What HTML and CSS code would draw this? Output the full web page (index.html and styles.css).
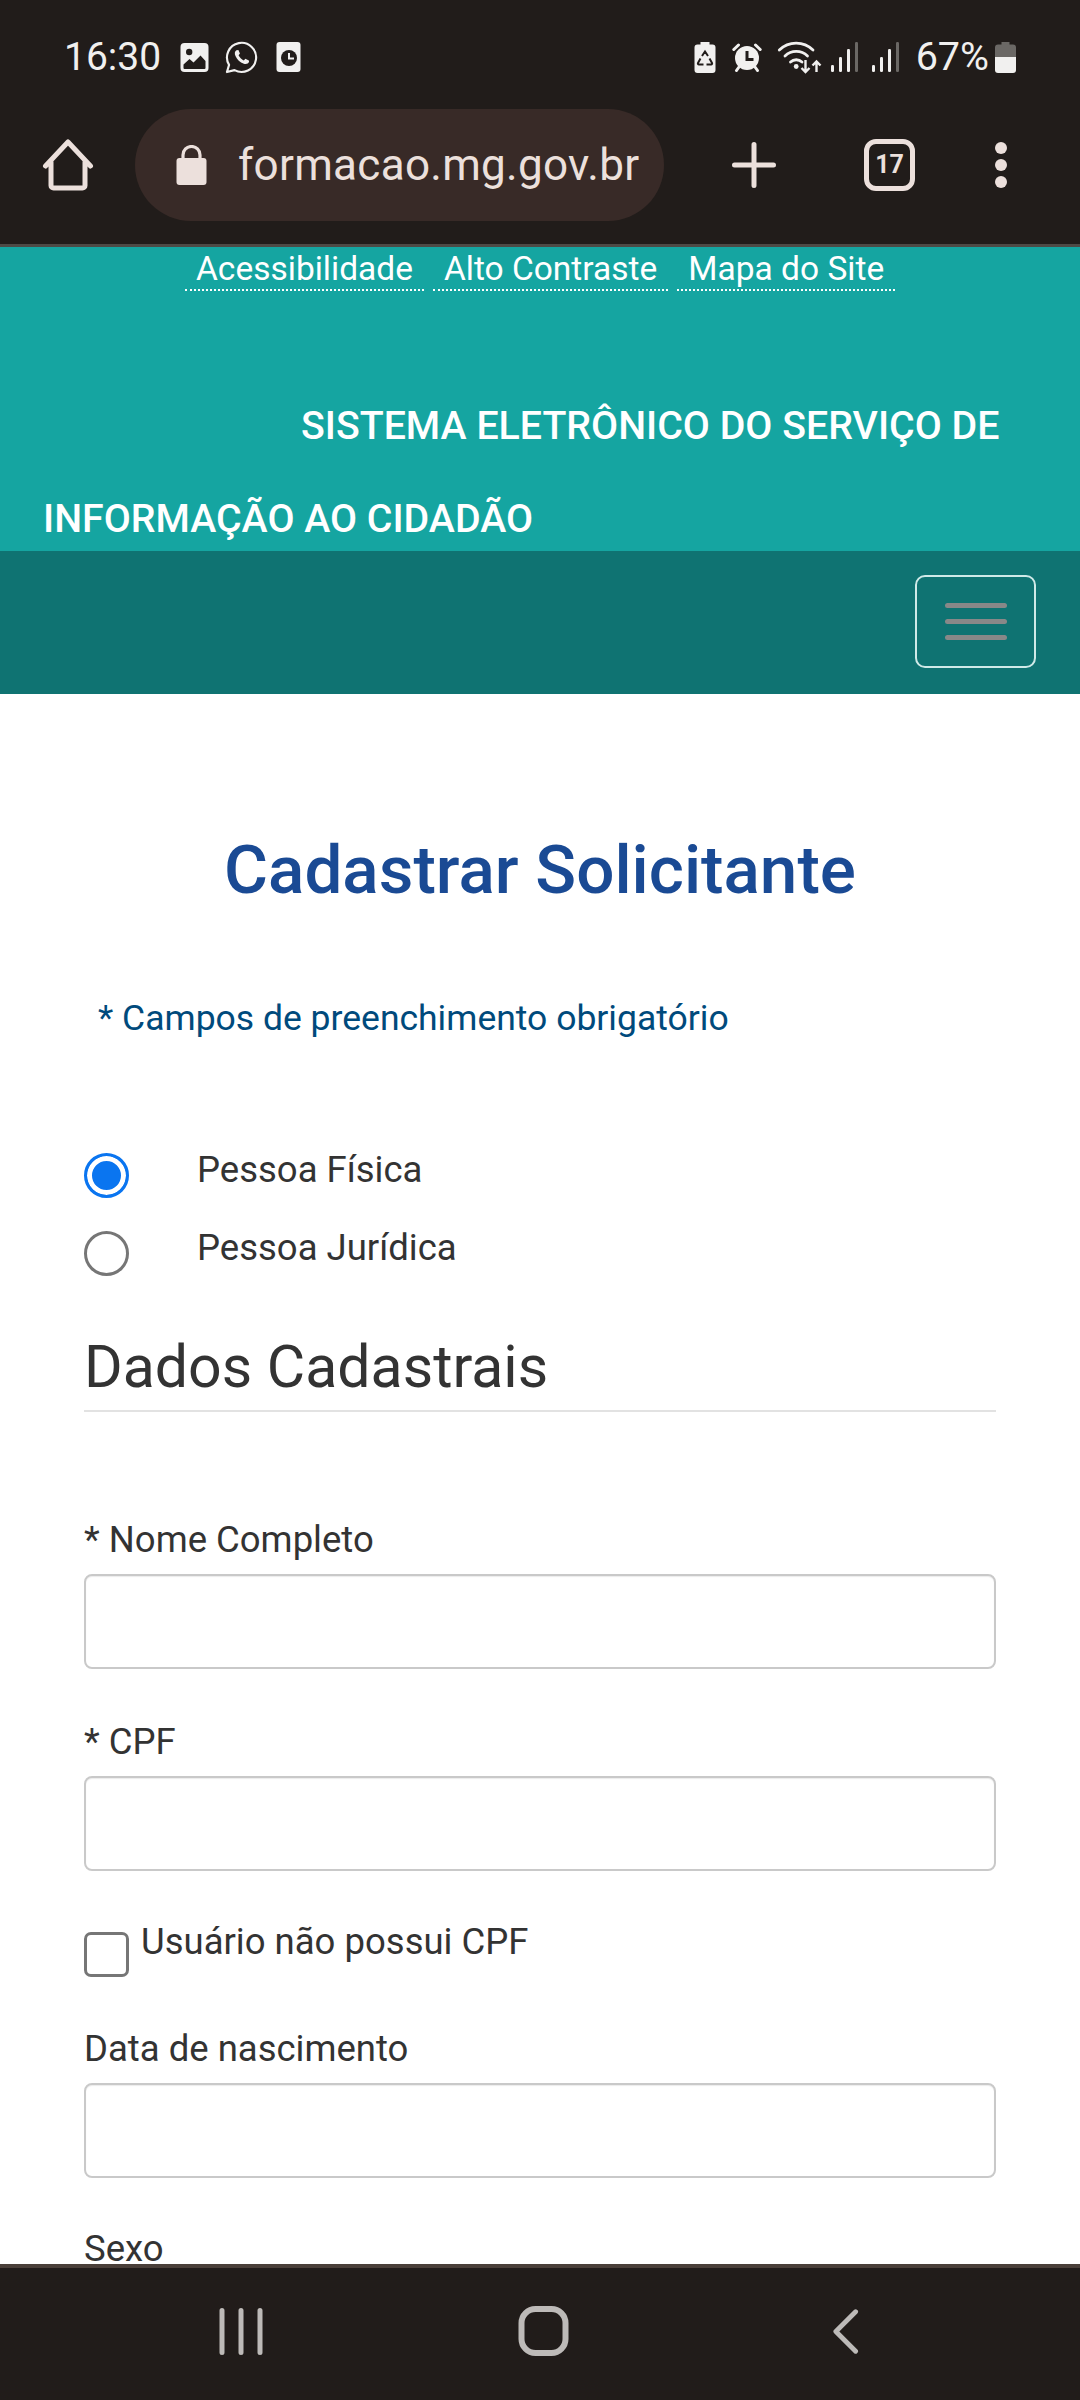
FILE: index.html
```html
<!DOCTYPE html>
<html lang="pt-BR">
<head>
<meta charset="utf-8">
<title>Cadastrar Solicitante</title>
<link rel="stylesheet" href="styles.css">
</head>
<body>
<div class="phone">
  <header class="chrome">
    <div class="status">
      <div class="status-left">
        <span class="time">16:30</span>
        <svg class="ic-gallery" viewBox="0 0 28 29"><rect width="28" height="29" rx="4" fill="#f1f0ef"/><circle cx="8.7" cy="9" r="3.2" fill="#211c1a"/><path d="M3 25 V21.5 L9 16 L13 19.5 L20 12.5 L25 18 V25 A1 1 0 0 1 24 26 H4 A1 1 0 0 1 3 25 Z" fill="#211c1a"/></svg>
        <svg class="ic-wa" viewBox="0 0 34 34"><path d="M2 32 L4.2 24.6 A15 15 0 1 1 9.8 30 Z" fill="none" stroke="#f1f0ef" stroke-width="2.2" stroke-linejoin="round"/><path d="M11.8 9.5 C10 10.6 9.6 12.8 10.8 15.4 C12.4 19 15.4 22 19.4 23.4 C21.8 24.2 24 23.4 24.8 21.4 L24.6 20 L21 18.4 L19.4 20 C17 19 15 17 14 14.8 L15.4 13 L13.8 9.4 Z" fill="#f1f0ef"/></svg>
        <svg class="ic-clock" viewBox="0 0 24 30"><rect width="24" height="30" rx="3" fill="#f1f0ef"/><circle cx="12.5" cy="16" r="8" fill="#211c1a"/><path d="M12.5 11 V16.5 H17.5" fill="none" stroke="#f1f0ef" stroke-width="2"/></svg>
      </div>
      <div class="status-right">
        <svg class="ic-recycle" viewBox="0 0 21 31"><path d="M6 0 H15 V2.5 H18 A3 3 0 0 1 21 5.5 V28 A3 3 0 0 1 18 31 H3 A3 3 0 0 1 0 28 V5.5 A3 3 0 0 1 3 2.5 H6 Z" fill="#f1f0ef"/><path d="M7.5 14 L10.5 9.5 L13.5 14 M15 16.5 L17.5 21 A1 1 0 0 1 16.6 22.5 H12 M9 22.5 H4.4 A1 1 0 0 1 3.5 21 L6 16.5" fill="none" stroke="#211c1a" stroke-width="2"/></svg>
        <svg class="ic-alarm" viewBox="0 0 30 30"><path d="M1.8 7.5 L6.5 3 M28.2 7.5 L23.5 3" stroke="#f1f0ef" stroke-width="3" stroke-linecap="round"/><path d="M7 25 L4.5 28.5 M23 25 L25.5 28.5" stroke="#f1f0ef" stroke-width="3" stroke-linecap="round"/><circle cx="15" cy="16" r="12" fill="#f1f0ef"/><path d="M15 9 V17.5 H21.5" fill="none" stroke="#211c1a" stroke-width="3"/></svg>
        <svg class="ic-wifi" viewBox="0 0 44 33"><path d="M1.8 9 A24 24 0 0 1 35.5 9" fill="none" stroke="#f1f0ef" stroke-width="2.8" stroke-linecap="round"/><path d="M7.5 15 A16 16 0 0 1 30 15" fill="none" stroke="#f1f0ef" stroke-width="2.8" stroke-linecap="round"/><path d="M13 21 A8.5 8.5 0 0 1 24.5 21" fill="none" stroke="#f1f0ef" stroke-width="2.8" stroke-linecap="round"/><circle cx="18.7" cy="25.5" r="2.4" fill="#f1f0ef"/><path d="M28 19 V31 M24 27 L28 31 L32 27 M39 31 V20.5 M35 24.5 L39 20.5 L43 24.5" fill="none" stroke="#f1f0ef" stroke-width="2.4"/></svg>
        <svg class="ic-signal" viewBox="0 0 27 30"><rect x="0" y="23" width="3" height="7" rx="1.2" fill="#f1f0ef"/><rect x="8" y="15" width="3" height="15" rx="1.2" fill="#f1f0ef"/><rect x="16" y="7" width="3" height="23" rx="1.2" fill="#f1f0ef"/><rect x="24" y="0" width="3" height="30" rx="1.2" fill="#6b6865"/></svg>
        <svg class="ic-signal ic-signal-b" viewBox="0 0 27 30"><rect x="0" y="23" width="3" height="7" rx="1.2" fill="#f1f0ef"/><rect x="8" y="15" width="3" height="15" rx="1.2" fill="#f1f0ef"/><rect x="16" y="7" width="3" height="23" rx="1.2" fill="#f1f0ef"/><rect x="24" y="0" width="3" height="30" rx="1.2" fill="#6b6865"/></svg>
        <span class="pct">67%</span>
        <svg class="ic-batt" viewBox="0 0 21 31"><path d="M6.5 0 H14.5 V2.5 H18 A3 3 0 0 1 21 5.5 V15 H0 V5.5 A3 3 0 0 1 3 2.5 H6.5 Z" fill="#6b6865"/><path d="M0 15 H21 V28 A3 3 0 0 1 18 31 H3 A3 3 0 0 1 0 28 Z" fill="#f1f0ef"/></svg>
      </div>
    </div>
    <div class="toolbar">
      <svg class="ic-home" viewBox="0 0 50 52"><path d="M2.5 27 L25 3 L47.5 27 M8 23 V46.5 A2.5 2.5 0 0 0 10.5 49 H39.5 A2.5 2.5 0 0 0 42 46.5 V23" fill="none" stroke="#ece0dc" stroke-width="5" stroke-linecap="round" stroke-linejoin="round"/></svg>
      <div class="omnibox">
        <svg class="ic-lock" viewBox="0 0 30 40"><rect x="0" y="13" width="30" height="27" rx="3" fill="#ece0dc"/><path d="M6.5 15 V10 A8.5 8.5 0 0 1 23.5 10 V15" fill="none" stroke="#ece0dc" stroke-width="3.2"/></svg>
        <span class="url">formacao.mg.gov.br</span>
      </div>
      <svg class="ic-plus" viewBox="0 0 44 46"><path d="M22 2.5 V43.5 M2.5 23 H41.5" stroke="#ece0dc" stroke-width="5" stroke-linecap="round"/></svg>
      <div class="tabs">17</div>
      <div class="dots"><i></i><i></i><i></i></div>
    </div>
  </header>

  <main class="viewport">
    <section class="brand">
      <nav class="access">
        <a>Acessibilidade</a>
        <a>Alto Contraste</a>
        <a>Mapa do Site</a>
      </nav>
      <div class="system">SISTEMA ELETRÔNICO DO SERVIÇO DE INFORMAÇÃO AO CIDADÃO</div>
    </section>
    <section class="menubar">
      <button class="toggler" type="button" aria-label="Menu"><i></i><i></i><i></i></button>
    </section>
    <section class="content">
      <h1>Cadastrar Solicitante</h1>
      <p class="required">* Campos de preenchimento obrigatório</p>
      <div class="person">
        <div class="radio-row"><span class="radio on"></span><span class="radio-label">Pessoa Física</span></div>
        <div class="radio-row"><span class="radio"></span><span class="radio-label">Pessoa Jurídica</span></div>
      </div>
      <h2>Dados Cadastrais</h2>
      <div class="field first"><label>* Nome Completo</label><div class="input"></div></div>
      <div class="field"><label>* CPF</label><div class="input"></div></div>
      <div class="check-row"><span class="check"></span><span class="check-label">Usuário não possui CPF</span></div>
      <div class="field"><label>Data de nascimento</label><div class="input"></div></div>
      <div class="field last"><label>Sexo</label></div>
    </section>
  </main>

  <footer class="navbar">
    <svg class="ic-recent" viewBox="0 0 44 47"><path d="M3 2.5 V44.5 M22 2.5 V44.5 M41 2.5 V44.5" stroke="#bdbab8" stroke-width="5" stroke-linecap="round"/></svg>
    <svg class="ic-navhome" viewBox="0 0 50 50"><rect x="3" y="3" width="44" height="44" rx="14" fill="none" stroke="#bdbab8" stroke-width="6"/></svg>
    <svg class="ic-back" viewBox="0 0 28 47"><path d="M24.5 3 L4 23.5 L24.5 44" fill="none" stroke="#bdbab8" stroke-width="5" stroke-linecap="round" stroke-linejoin="round"/></svg>
  </footer>
</div>
</body>
</html>
```

FILE: styles.css
```css
* { box-sizing: border-box; }
html, body { margin: 0; padding: 0; }
body { font-family: Roboto, "Noto Sans", sans-serif; background: #fff; }
.phone { width: 1080px; height: 2400px; display: flex; flex-direction: column; overflow: hidden; }

.chrome { background: #211c1a; height: 247px; border-bottom: 3px solid #4d4a46; flex: none; }
.status { height: 108px; padding: 38px 64px 0 64px; display: flex; justify-content: space-between; align-items: flex-start; color: #f1f0ef; }
.status-left, .status-right { display: flex; align-items: center; height: 38px; }
.time { font-size: 39px; line-height: 38px; margin-right: 19px; }
.ic-gallery { width: 29px; height: 29px; margin-right: 16px; }
.ic-wa { width: 33px; height: 33px; margin-right: 18px; }
.ic-clock { width: 25px; height: 30px; }
.ic-recycle { width: 22px; height: 31px; margin-right: 16px; }
.ic-alarm { width: 30px; height: 30px; margin-right: 15px; }
.ic-wifi { width: 45px; height: 33px; margin-right: 9px; }
.ic-signal { width: 27px; height: 30px; margin-right: 14px; }
.ic-signal-b { margin-right: 17px; }
.pct { font-size: 39.5px; line-height: 38px; margin-right: 6px; }
.ic-batt { width: 21px; height: 31px; }

.toolbar { height: 136px; padding: 0 0 0 42px; display: flex; align-items: flex-start; color: #ece0dc; }
.ic-home { width: 52px; height: 52px; margin-top: 31px; margin-right: 41px; flex: none; }
.omnibox { width: 529px; height: 112px; background: #382a27; border-radius: 56px; margin-top: 1px; margin-right: 67px; padding-left: 41px; display: flex; align-items: center; flex: none; }
.ic-lock { width: 31px; height: 40px; margin-right: 31px; flex: none; }
.url { font-size: 44px; letter-spacing: 0.3px; white-space: nowrap; }
.ic-plus { width: 46px; height: 46px; margin-top: 34px; margin-right: 87px; flex: none; }
.tabs { width: 51px; height: 52px; margin-top: 31px; margin-right: 80px; border: 5px solid #ece0dc; border-radius: 12px; font-size: 25px; font-weight: 700; line-height: 42px; text-align: center; flex: none; }
.dots { margin-top: 34px; display: flex; flex-direction: column; gap: 5px; }
.dots i { display: block; width: 12px; height: 12px; border-radius: 50%; background: #ece0dc; }

.viewport { flex: 1; overflow: hidden; min-height: 0; }
.brand { height: 304px; background: #15a5a1; color: #fff; padding: 0 43px; }
.access { display: flex; gap: 9px; padding-left: 142px; height: 44px; }
.access a { font-size: 33.5px; line-height: 44px; padding: 0 11px; border-bottom: 2px dotted #fff; }
.system { padding-top: 89px; font-size: 39.3px; font-weight: 500; line-height: 93px; text-indent: 258px; }
.menubar { height: 143px; background: #0f7372; padding: 24px 44px 0 0; display: flex; justify-content: flex-end; align-items: flex-start; }
.toggler { width: 121px; height: 93px; background: none; border: 2px solid #cfeae8; border-radius: 10px; padding: 0; display: flex; flex-direction: column; align-items: center; justify-content: center; gap: 11px; }
.toggler i { display: block; width: 62px; height: 5px; border-radius: 3px; background: #888; }

.content { padding: 0 84px; color: #333; font-size: 36.5px; }
h1 { margin: 0; padding-top: 135px; text-align: center; font-size: 67.4px; line-height: 82px; font-weight: 500; color: #1a4a94; }
.required { margin: 0; padding: 82px 0 0 14px; color: #004a7c; font-size: 35.5px; line-height: 50px; }
.person { padding-top: 97px; }
.radio-row { display: flex; align-items: flex-start; height: 78px; }
.radio { width: 45px; height: 45px; border-radius: 50%; border: 3px solid #767676; margin-top: 13px; margin-right: 68px; flex: none; background: #fff; }
.radio.on { border-color: #0a75f0; background: #0a75f0; box-shadow: inset 0 0 0 5px #fff; }
.radio-label { padding-top: 10px; line-height: 40px; }
h2 { margin: 0; padding-top: 37px; padding-bottom: 8.5px; border-bottom: 2px solid #e2e2e2; font-size: 59px; line-height: 68px; font-weight: 400; color: #333; }
.field { margin-top: 52.5px; }
.field.first { margin-top: 108px; }
.field.last { margin-top: 56px; }
.field label { display: block; line-height: 40px; height: 40px; }
.field.last label { line-height: 30px; height: 30px; }
.input { height: 95px; margin-top: 14.5px; border: 2px solid #c9c9c9; border-radius: 8px; background: #fff; box-shadow: inset 0 1px 1px rgba(0,0,0,.08); }
.check-row { display: flex; align-items: flex-start; margin-top: 38px; height: 119.5px; }
.check-label { padding-top: 13px; line-height: 40px; }
.check { width: 45px; height: 45px; border: 3px solid #767676; border-radius: 7px; margin-top: 23px; margin-right: 12px; flex: none; }
.check-row + .field { margin-top: 0; }

.navbar { flex: none; height: 136px; background: #211c1a; border-top: 4px solid #4a3f39; display: flex; align-items: flex-start; padding-top: 40px; }
.ic-recent { width: 44px; height: 47px; margin-left: 219px; }
.ic-navhome { width: 51px; height: 50px; margin-left: 255px; margin-top: -2px; }
.ic-back { width: 27px; height: 47px; margin-left: 263px; }
```
